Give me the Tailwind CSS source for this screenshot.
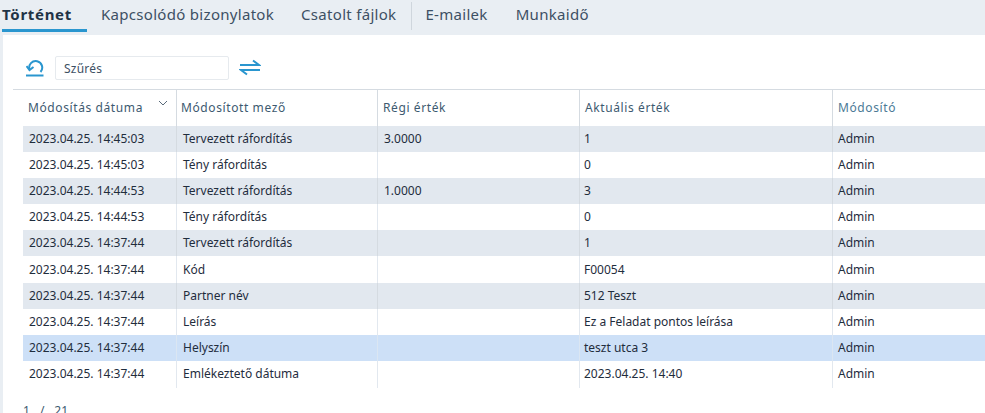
<!DOCTYPE html>
<html lang="en">

<head>
    <meta charset="UTF-8" />
    <title>Történet</title>
    <script src="https://cdn.jsdelivr.net/npm/@tailwindcss/browser@4"></script>
</head>

<body class="h-[413px] w-[985px] overflow-hidden bg-[#e9eef3] font-['Noto_Sans',sans-serif] text-[#1f2d3d]">
    <!-- Tabs -->
    <nav class="flex h-[32px] pl-[2px] text-[15px] tracking-[0.3px] text-[#3d5064]">
        <a class="flex w-[85px] items-center border-b-[3px] border-[#2a96cf] font-bold tracking-[0.7px] text-[#1f3346]">Történet</a>
        <a class="ml-[14px] flex items-center pb-[3px]">Kapcsolódó bizonylatok</a>
        <a class="ml-[27px] flex items-center pb-[3px]">Csatolt fájlok</a>
        <span class="my-[2px] ml-[15px] w-px bg-[#cfd6dd]"></span>
        <a class="ml-[13px] flex items-center pb-[3px]">E-mailek</a>
        <a class="ml-[28px] flex items-center pb-[3px]">Munkaidő</a>
    </nav>

    <main class="mt-[3px] ml-[3px] h-[378px] bg-white pl-[10px]">
        <!-- Toolbar -->
        <div class="flex h-[54px] items-start pt-[21px]">
            <svg class="ml-[13px] mt-[3px]" width="18" height="18" viewBox="0 0 18 18" fill="none" stroke="#2a96cf" stroke-width="2">
                <path d="M3.5 10.5 A6.5 6.5 0 1 1 14.5 13" />
                <path d="M0.5 7 L3.5 11 L7.5 8" />
                <path d="M0 16.5 H17.5" />
            </svg>
            <div class="ml-[11px] flex h-[24px] w-[174px] items-center rounded-[2px] border border-[#e6eaee] pt-[1px] pl-[8px] text-[12px] tracking-[0.2px] text-[#3d5064]">Szűrés</div>
            <svg class="ml-[10px] mt-[3px]" width="22" height="18" viewBox="0 0 22 18" fill="none" stroke="#2a96cf" stroke-width="2">
                <path d="M1 6 H20 L14 1.5" />
                <path d="M21 11 H2 L8 15.5" />
            </svg>
        </div>

        <!-- Table -->
        <div class="border-t border-[#d5dbe1] text-[12px]">
            <div class="grid h-[36px] grid-cols-[164px_201px_202px_253px_140px] items-center tracking-[0.6px] text-[#3d5a70]">
                <div class="relative h-full border-r border-[#d5dbe1] pl-[15px] leading-[35px]">
                    Módosítás dátuma
                    <svg class="absolute top-[10px] right-[8px]" width="10" height="6" viewBox="0 0 10 6" fill="none" stroke="#5a6b7a" stroke-width="1"><path d="M1 1 L5 5 L9 1" /></svg>
                </div>
                <div class="h-full border-r border-[#d5dbe1] pl-[4px] leading-[35px]">Módosított mező</div>
                <div class="h-full border-r border-[#d5dbe1] pl-[5px] leading-[35px]">Régi érték</div>
                <div class="h-full border-r border-[#d5dbe1] pl-[5px] leading-[35px]">Aktuális érték</div>
                <div class="h-full pl-[5px] leading-[35px] text-[#4b7a96]">Módosító</div>
            </div>

            <div class="ml-[10px] grid h-[26px] grid-cols-[154px_201px_202px_253px_140px] items-center bg-[#e2e8ef]">
                <div class="h-full border-r border-[#d5dbe1] pl-[6px] leading-[25px]">2023.04.25. 14:45:03</div>
                <div class="h-full border-r border-[#d5dbe1] pl-[6px] leading-[25px]">Tervezett ráfordítás</div>
                <div class="h-full border-r border-[#d5dbe1] pl-[6px] leading-[25px]">3.0000</div>
                <div class="h-full border-r border-[#d5dbe1] pl-[4px] leading-[25px]">1</div>
                <div class="h-full pl-[5px] leading-[25px]">Admin</div>
            </div>
            <div class="ml-[10px] grid h-[26px] grid-cols-[154px_201px_202px_253px_140px] items-center">
                <div class="h-full border-r border-[#e2e8ef] pl-[6px] leading-[25px]">2023.04.25. 14:45:03</div>
                <div class="h-full border-r border-[#e2e8ef] pl-[6px] leading-[25px]">Tény ráfordítás</div>
                <div class="h-full border-r border-[#e2e8ef] pl-[6px] leading-[25px]"></div>
                <div class="h-full border-r border-[#e2e8ef] pl-[4px] leading-[25px]">0</div>
                <div class="h-full pl-[5px] leading-[25px]">Admin</div>
            </div>
            <div class="ml-[10px] grid h-[26px] grid-cols-[154px_201px_202px_253px_140px] items-center bg-[#e2e8ef]">
                <div class="h-full border-r border-[#d5dbe1] pl-[6px] leading-[25px]">2023.04.25. 14:44:53</div>
                <div class="h-full border-r border-[#d5dbe1] pl-[6px] leading-[25px]">Tervezett ráfordítás</div>
                <div class="h-full border-r border-[#d5dbe1] pl-[6px] leading-[25px]">1.0000</div>
                <div class="h-full border-r border-[#d5dbe1] pl-[4px] leading-[25px]">3</div>
                <div class="h-full pl-[5px] leading-[25px]">Admin</div>
            </div>
            <div class="ml-[10px] grid h-[26px] grid-cols-[154px_201px_202px_253px_140px] items-center">
                <div class="h-full border-r border-[#e2e8ef] pl-[6px] leading-[25px]">2023.04.25. 14:44:53</div>
                <div class="h-full border-r border-[#e2e8ef] pl-[6px] leading-[25px]">Tény ráfordítás</div>
                <div class="h-full border-r border-[#e2e8ef] pl-[6px] leading-[25px]"></div>
                <div class="h-full border-r border-[#e2e8ef] pl-[4px] leading-[25px]">0</div>
                <div class="h-full pl-[5px] leading-[25px]">Admin</div>
            </div>
            <div class="ml-[10px] grid h-[26px] grid-cols-[154px_201px_202px_253px_140px] items-center bg-[#e2e8ef]">
                <div class="h-full border-r border-[#d5dbe1] pl-[6px] leading-[25px]">2023.04.25. 14:37:44</div>
                <div class="h-full border-r border-[#d5dbe1] pl-[6px] leading-[25px]">Tervezett ráfordítás</div>
                <div class="h-full border-r border-[#d5dbe1] pl-[6px] leading-[25px]"></div>
                <div class="h-full border-r border-[#d5dbe1] pl-[4px] leading-[25px]">1</div>
                <div class="h-full pl-[5px] leading-[25px]">Admin</div>
            </div>
            <div class="ml-[10px] grid h-[27px] grid-cols-[154px_201px_202px_253px_140px] items-center">
                <div class="h-full border-r border-[#e2e8ef] pl-[6px] leading-[27px]">2023.04.25. 14:37:44</div>
                <div class="h-full border-r border-[#e2e8ef] pl-[6px] leading-[27px]">Kód</div>
                <div class="h-full border-r border-[#e2e8ef] pl-[6px] leading-[27px]"></div>
                <div class="h-full border-r border-[#e2e8ef] pl-[4px] leading-[27px]">F00054</div>
                <div class="h-full pl-[5px] leading-[27px]">Admin</div>
            </div>
            <div class="ml-[10px] grid h-[26px] grid-cols-[154px_201px_202px_253px_140px] items-center bg-[#e2e8ef]">
                <div class="h-full border-r border-[#d5dbe1] pl-[6px] leading-[25px]">2023.04.25. 14:37:44</div>
                <div class="h-full border-r border-[#d5dbe1] pl-[6px] leading-[25px]">Partner név</div>
                <div class="h-full border-r border-[#d5dbe1] pl-[6px] leading-[25px]"></div>
                <div class="h-full border-r border-[#d5dbe1] pl-[4px] leading-[25px]">512 Teszt</div>
                <div class="h-full pl-[5px] leading-[25px]">Admin</div>
            </div>
            <div class="ml-[10px] grid h-[26px] grid-cols-[154px_201px_202px_253px_140px] items-center">
                <div class="h-full border-r border-[#e2e8ef] pl-[6px] leading-[25px]">2023.04.25. 14:37:44</div>
                <div class="h-full border-r border-[#e2e8ef] pl-[6px] leading-[25px]">Leírás</div>
                <div class="h-full border-r border-[#e2e8ef] pl-[6px] leading-[25px]"></div>
                <div class="h-full border-r border-[#e2e8ef] pl-[4px] leading-[25px]">Ez a Feladat pontos leírása</div>
                <div class="h-full pl-[5px] leading-[25px]">Admin</div>
            </div>
            <div class="ml-[10px] grid h-[26px] grid-cols-[154px_201px_202px_253px_140px] items-center bg-[#cde0f7]">
                <div class="h-full border-r border-[#dbe6f2] pl-[6px] leading-[25px]">2023.04.25. 14:37:44</div>
                <div class="h-full border-r border-[#dbe6f2] pl-[6px] leading-[25px]">Helyszín</div>
                <div class="h-full border-r border-[#dbe6f2] pl-[6px] leading-[25px]"></div>
                <div class="h-full border-r border-[#dbe6f2] pl-[4px] leading-[25px]">teszt utca 3</div>
                <div class="h-full pl-[5px] leading-[25px]">Admin</div>
            </div>
            <div class="ml-[10px] grid h-[27px] grid-cols-[154px_201px_202px_253px_140px] items-center">
                <div class="h-full border-r border-[#e2e8ef] pl-[6px] leading-[25px]">2023.04.25. 14:37:44</div>
                <div class="h-full border-r border-[#e2e8ef] pl-[6px] leading-[25px]">Emlékeztető dátuma</div>
                <div class="h-full border-r border-[#e2e8ef] pl-[6px] leading-[25px]"></div>
                <div class="h-full border-r border-[#e2e8ef] pl-[4px] leading-[25px]">2023.04.25. 14:40</div>
                <div class="h-full pl-[5px] leading-[25px]">Admin</div>
            </div>
        </div>

        <!-- Pager -->
        <div class="mt-[15px] flex gap-[10px] pl-[10px] text-[12px] leading-[16px] text-[#3d5a70]">
            <span>1</span><span>/</span><span>21</span>
        </div>
    </main>
</body>

</html>
